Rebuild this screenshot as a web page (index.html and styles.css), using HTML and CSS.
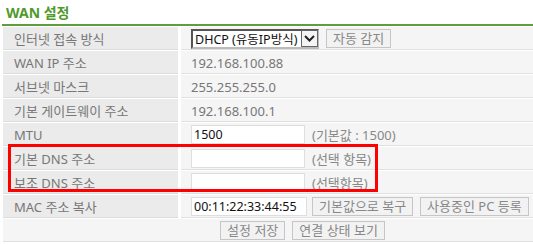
FILE: index.html
```html
<!DOCTYPE html>
<html>
<head>
  <title>WAN 설정</title>
  <link rel="stylesheet" href="styles.css">
</head>
<body>
  <div class="page">
    <h2 class="title">WAN 설정</h2>
    <div class="form">
      <div class="row">
        <div class="label">인터넷 접속 방식</div>
        <div class="value">
          <div class="select">
            <span class="select-text">DHCP (유동IP방식)</span>
            <span class="select-arrow">
              <svg width="11" height="7" viewBox="0 0 11 7"><path d="M1 1 L5.5 5.5 L10 1" fill="none" stroke="#222" stroke-width="2"/></svg>
            </span>
          </div>
          <button type="button" class="btn">자동 감지</button>
        </div>
      </div>
      <div class="row">
        <div class="label">WAN IP 주소</div>
        <div class="value">192.168.100.88</div>
      </div>
      <div class="row">
        <div class="label">서브넷 마스크</div>
        <div class="value">255.255.255.0</div>
      </div>
      <div class="row">
        <div class="label">기본 게이트웨이 주소</div>
        <div class="value">192.168.100.1</div>
      </div>
      <div class="row">
        <div class="label">MTU</div>
        <div class="value">
          <input type="text" class="field" value="1500">
          <span class="hint">(기본값 : 1500)</span>
        </div>
      </div>
      <div class="group">
        <div class="row">
          <div class="label">기본 DNS 주소</div>
          <div class="value">
            <input type="text" class="field">
            <span class="hint">(선택 항목)</span>
          </div>
        </div>
        <div class="row">
          <div class="label">보조 DNS 주소</div>
          <div class="value">
            <input type="text" class="field">
            <span class="hint">(선택항목)</span>
          </div>
        </div>
        <div class="mark"></div>
      </div>
      <div class="row">
        <div class="label">MAC 주소 복사</div>
        <div class="value">
          <input type="text" class="field mac" value="00:11:22:33:44:55">
          <button type="button" class="btn">기본값으로 복구</button>
          <button type="button" class="btn">사용중인 PC 등록</button>
        </div>
      </div>
      <div class="row">
        <div class="value actions">
          <button type="button" class="btn">설정 저장</button>
          <button type="button" class="btn">연결 상태 보기</button>
        </div>
      </div>
    </div>
  </div>
</body>
</html>
```

FILE: styles.css
```css
body {
  margin: 0;
  background: white;
  font-family: "Noto Sans", "Noto Sans CJK KR", sans-serif;
  font-size: 13px;
  color: #777;
}

.page {
  width: 600px;
  padding-left: 2px;
}

.title {
  margin: 0;
  height: 24px;
  line-height: 26px;
  padding-left: 4px;
  font-size: 14px;
  font-weight: bold;
  color: #4f9a2a;
  border-bottom: 2px solid #5e9e3c;
}

.form {
  padding: 1px 0 0 1px;
}

.row {
  display: flex;
  height: 23px;
  margin-bottom: 1px;
}

.label {
  width: 164px;
  padding-left: 11px;
  background-color: #ebebeb;
  border-bottom: 1px solid #dcdcdc;
  line-height: 24px;
}

.value {
  flex: 1;
  display: flex;
  align-items: center;
  gap: 7px;
  margin-left: 3px;
  padding-left: 10px;
  padding-top: 1px;
  background-color: #f5f5f5;
  border-bottom: 1px solid #e0e0e0;
}

.select {
  display: flex;
  align-items: center;
  width: 124px;
  height: 16px;
  background: white;
  border: 2px solid #555;
  border-right-color: #bbb;
  border-bottom-color: #bbb;
  color: #111;
  font-size: 12.5px;
}

.select-text {
  flex: 1;
  padding-left: 2px;
  white-space: nowrap;
  overflow: hidden;
}

.select-arrow {
  display: flex;
  align-items: center;
  justify-content: center;
  width: 17px;
  height: 17px;
  margin-right: -1px;
  border: 1px solid #666;
  box-sizing: border-box;
  background: #f4f4f4;
}

.btn {
  height: 19px;
  padding: 0 6px;
  background-color: #f2f2f2;
  border: 1px solid #c6c6c6;
  font-family: inherit;
  font-size: 13px;
  line-height: 17px;
  color: #888;
}

.field {
  width: 108px;
  height: 15px;
  padding: 1px 2px;
  background: white;
  border: 1px solid #dedede;
  font-family: inherit;
  font-size: 12.5px;
  color: #111;
}

.field.mac {
  width: 110px;
  margin-right: -2px;
}

.hint {
  color: #888;
}

.group {
  position: relative;
}

.mark {
  position: absolute;
  top: -3px;
  left: 5px;
  width: 364px;
  height: 42px;
  border: 3px solid #f00;
}

.actions {
  margin-left: 0;
  padding-left: 0;
  justify-content: center;
}
```
